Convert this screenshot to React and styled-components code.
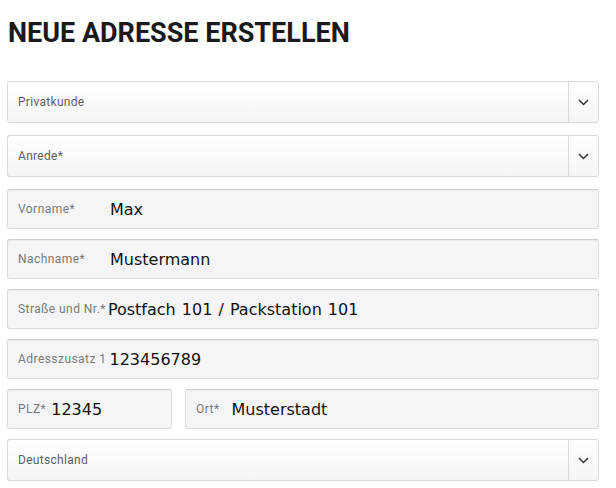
import React from "react";
import styled, { createGlobalStyle } from "styled-components";

const GlobalStyle = createGlobalStyle`
  body {
    margin: 0;
    background: #fff;
    font-family: Roboto, "Liberation Sans", sans-serif;
  }
`;

const Page = styled.div`
  width: 592px;
  padding: 17px 0 0 7px;
`;

const Title = styled.h1`
  margin: 0 0 32px 1px;
  font-size: 27px;
  line-height: 32px;
  font-weight: 700;
  color: #1a1a1a;
`;

const Form = styled.form`
  display: flex;
  flex-direction: column;
`;

const SelectBox = styled.div`
  display: flex;
  height: 42px;
  box-sizing: border-box;
  margin-bottom: 12px;
  border: 1px solid #dadada;
  border-radius: 3px;
  background: linear-gradient(#ffffff, #f5f5f5);
`;

const SelectText = styled.div`
  flex: 1;
  display: flex;
  align-items: center;
  padding-left: 10px;
  font-size: 12px;
  letter-spacing: 0.3px;
  color: #5f5f5f;
`;

const Arrow = styled.div`
  width: 29px;
  display: flex;
  align-items: center;
  justify-content: center;
  border-left: 1px solid #dadada;
`;

const Row = styled.div`
  display: flex;
  gap: 13px;
  margin-bottom: 10px;
`;

const Field = styled.label`
  display: flex;
  align-items: center;
  flex: ${(p) => (p.$width ? `0 0 ${p.$width}px` : "1 1 0")};
  min-width: 0;
  height: 40px;
  box-sizing: border-box;
  padding-left: 10px;
  border: 1px solid #dcdcdc;
  border-top-color: #cfcfcf;
  border-radius: 3px;
  background: #f5f5f7;
  box-shadow: inset 0 1px 1px rgba(0, 0, 0, 0.04);
`;

const Label = styled.span`
  flex: 0 0 auto;
  min-width: ${(p) => p.$min || 0}px;
  margin-right: ${(p) => p.$gap ?? 2}px;
  font-size: 12px;
  letter-spacing: 0.45px;
  color: #7a7a7a;
  white-space: nowrap;
`;

const Value = styled.input`
  flex: 1 1 0;
  width: 0;
  min-width: 0;
  border: 0;
  padding: 0;
  background: transparent;
  font-family: "DejaVu Sans", Verdana, sans-serif;
  font-size: 16px;
  word-spacing: 1px;
  color: #111;
  outline: none;
`;

const Chevron = () => (
  <svg width="11" height="7" viewBox="0 0 11 7">
    <path d="M1 1l4.5 4.5L10 1" fill="none" stroke="#333" strokeWidth="1.5" />
  </svg>
);

const Select = ({ children }) => (
  <SelectBox>
    <SelectText>{children}</SelectText>
    <Arrow>
      <Chevron />
    </Arrow>
  </SelectBox>
);

const Input = ({ label, value, min, gap, width }) => (
  <Field $width={width}>
    <Label $min={min} $gap={gap}>
      {label}
    </Label>
    <Value defaultValue={value} />
  </Field>
);

export default function App() {
  return (
    <Page>
      <GlobalStyle />
      <Title>NEUE ADRESSE ERSTELLEN</Title>
      <Form>
        <Select>Privatkunde</Select>
        <Select>Anrede*</Select>
        <Row>
          <Input label="Vorname*" value="Max" min={92} gap={0} />
        </Row>
        <Row>
          <Input label="Nachname*" value="Mustermann" min={92} gap={0} />
        </Row>
        <Row>
          <Input label="Straße und Nr.*" value="Postfach 101 / Packstation 101" gap={2} />
        </Row>
        <Row>
          <Input label="Adresszusatz 1" value="123456789" gap={3} />
        </Row>
        <Row>
          <Input label="PLZ*" value="12345" width={165} gap={5} />
          <Input label="Ort*" value="Musterstadt" gap={12} />
        </Row>
        <Select>Deutschland</Select>
      </Form>
    </Page>
  );
}
